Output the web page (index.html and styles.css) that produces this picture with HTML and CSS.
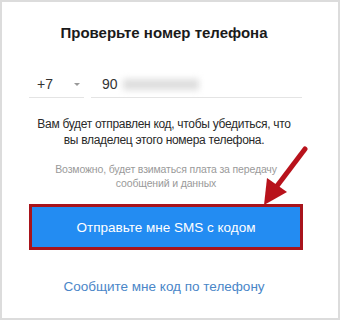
FILE: index.html
```html
<!DOCTYPE html>
<html lang="ru">
<head>
    <meta charset="UTF-8">
    <title>Проверьте номер телефона</title>
    <link rel="stylesheet" href="styles.css">
</head>
<body>
    <div class="frame">
        <h1 class="title">Проверьте номер телефона</h1>

        <div class="phone-row">
            <div class="country">
                <span>+7</span>
                <span class="caret"></span>
            </div>
            <div class="number">
                <span>90</span>
                <span class="blur"></span>
            </div>
        </div>

        <p class="info">Вам будет отправлен код, чтобы убедиться, что<br>вы владелец этого номера телефона.</p>
        <p class="note">Возможно, будет взиматься плата за передачу<br>сообщений и данных</p>

        <div class="btn-wrap">
            <button class="sms-btn">Отправьте мне SMS с кодом</button>
            <svg class="arrow" width="50" height="62" viewBox="0 0 50 62">
                <line x1="44" y1="3" x2="16" y2="40" stroke="#b8121b" stroke-width="5" stroke-linecap="round"/>
                <polygon points="3,59 6,32 26,46" fill="#b8121b"/>
            </svg>
        </div>

        <a class="call-link" href="#">Сообщите мне код по телефону</a>
    </div>
</body>
</html>
```

FILE: styles.css
```css
* {
    margin: 0;
    padding: 0;
    box-sizing: border-box;
}

body {
    font-family: 'Liberation Sans', Arial, sans-serif;
    background-color: #fff;
    color: #222;
}

.frame {
    width: 340px;
    height: 320px;
    border: 2px solid #dcdcdc;
    padding: 22px 35px 0 27px;
    display: flex;
    flex-direction: column;
}

.title {
    font-size: 15px;
    font-weight: bold;
    text-align: center;
    color: #1a1a1a;
    padding-right: 4px;
}

.phone-row {
    display: flex;
    gap: 7px;
    margin-top: 35px;
}

.country {
    width: 55px;
    display: flex;
    justify-content: space-between;
    align-items: center;
    padding: 0 4px 5px 8px;
    border-bottom: 1px solid #e4e4e4;
    font-size: 14px;
    color: #333;
}

.caret {
    width: 0;
    height: 0;
    border-left: 3px solid transparent;
    border-right: 3px solid transparent;
    border-top: 3px solid #999;
}

.number {
    width: 211px;
    display: flex;
    align-items: center;
    padding: 0 0 5px 11px;
    border-bottom: 1px solid #e4e4e4;
    font-size: 14px;
    color: #333;
}

.blur {
    width: 76px;
    height: 11px;
    margin-left: 5px;
    background-color: #dedede;
    filter: blur(3px);
}

.info {
    margin-top: 18px;
    font-size: 12px;
    letter-spacing: -0.3px;
    line-height: 16px;
    text-align: center;
    color: #2a2a2a;
    padding-right: 4px;
}

.note {
    margin-top: 14px;
    font-size: 10.5px;
    letter-spacing: -0.15px;
    line-height: 14px;
    text-align: center;
    color: #9a9a9a;
}

.btn-wrap {
    position: relative;
    margin-top: 14px;
}

.sms-btn {
    width: 274px;
    height: 46px;
    background-color: #238cf2;
    border: 3px solid #a8141c;
    color: #fff;
    font-family: 'Liberation Sans', Arial, sans-serif;
    font-size: 13.5px;
}

.arrow {
    position: absolute;
    left: 232px;
    top: -58px;
}

.call-link {
    margin-top: 29px;
    text-align: center;
    font-size: 13.5px;
    color: #4a86c8;
    text-decoration: none;
    padding-right: 4px;
}
```
